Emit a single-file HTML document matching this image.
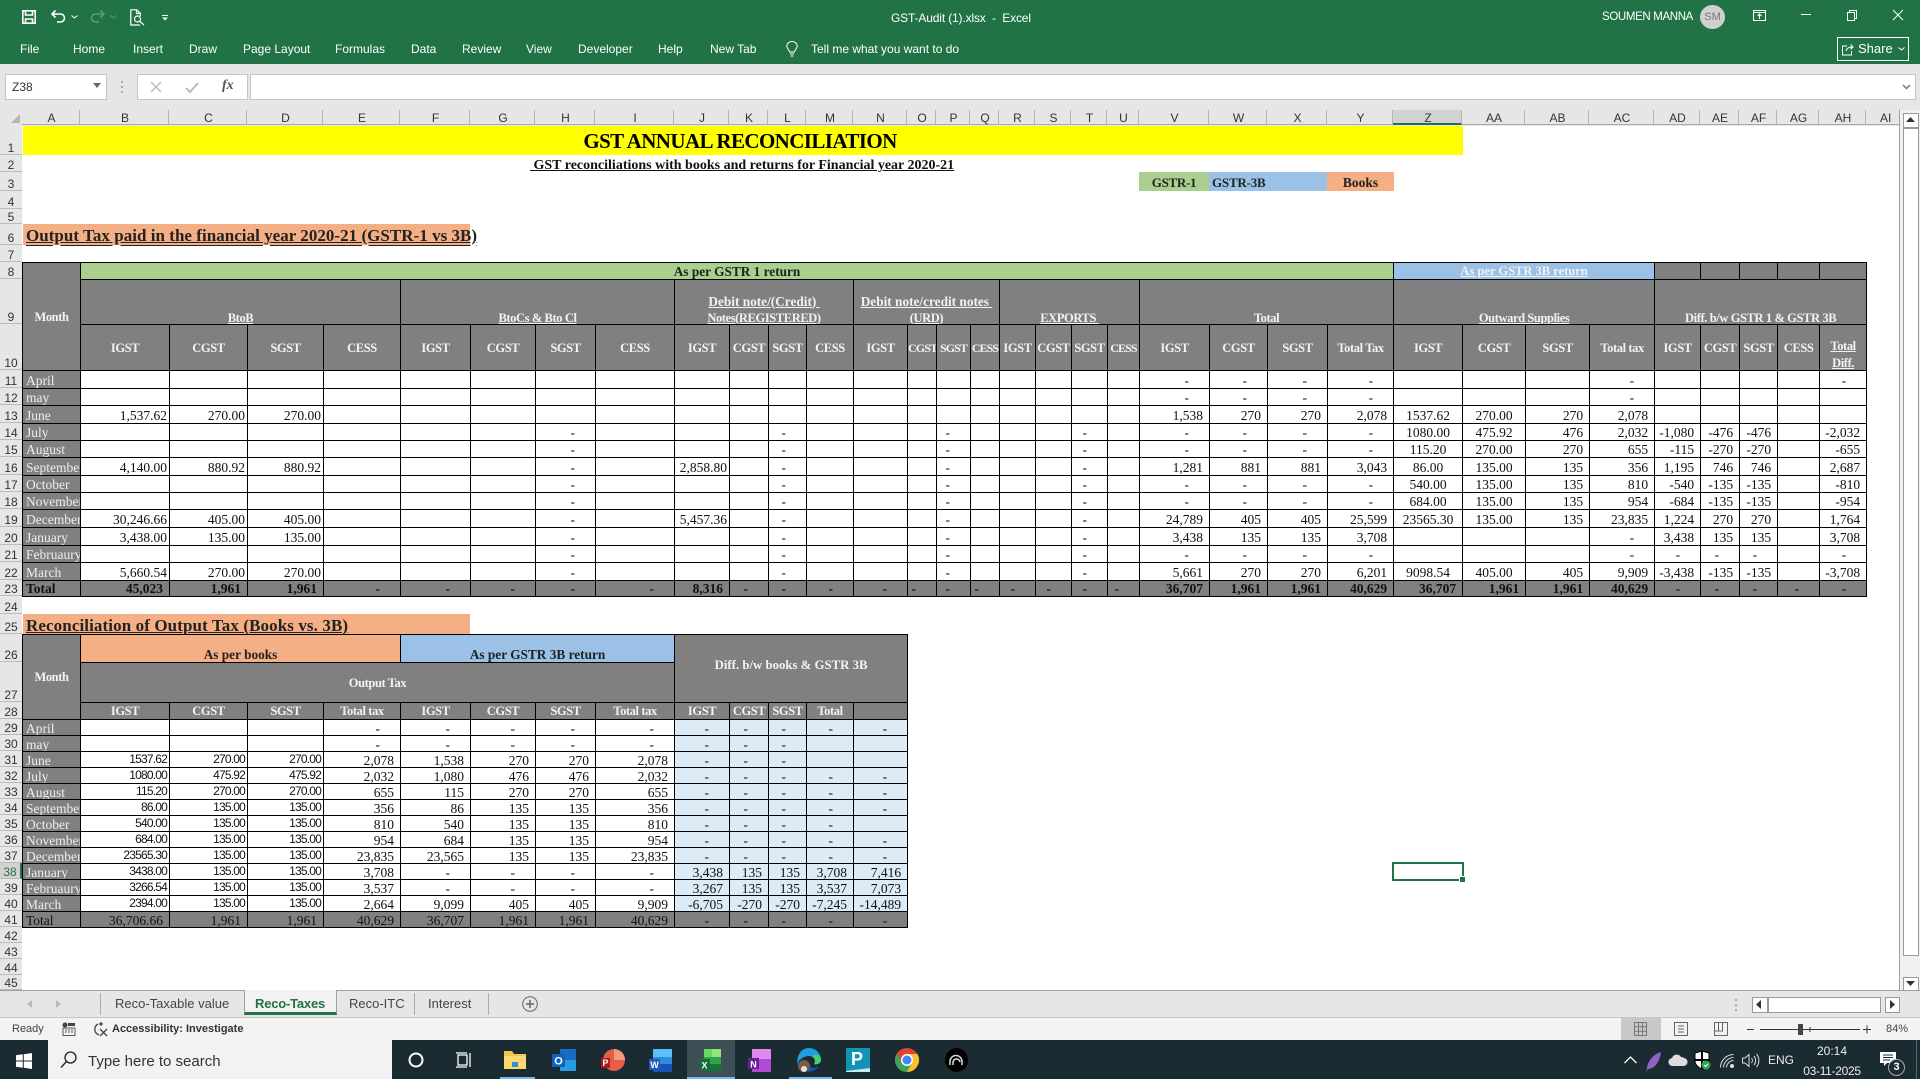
<!DOCTYPE html>
<html><head><meta charset="utf-8"><title>GST-Audit</title>
<style>
html,body{margin:0;padding:0;width:1920px;height:1079px;overflow:hidden;background:#fff;font-family:"Liberation Sans",sans-serif}
.a{position:absolute;white-space:nowrap}
.u{font-size:12px;color:#fff;line-height:14px}
.ch{position:absolute;top:110px;height:15px;background:#e6e6e6;border-right:1px solid #b5b5b5;font-size:12px;line-height:16px;text-align:center;color:#333;box-sizing:border-box;border-bottom:1px solid #aaa;padding-left:2px}
.rh{position:absolute;left:0;width:22px;background:#e6e6e6;border-bottom:1px solid #bbb;box-sizing:border-box;font-size:12px;line-height:12px;text-align:center;color:#333;display:flex;align-items:flex-end;justify-content:center}
table{position:absolute;left:22px;border-collapse:collapse;table-layout:fixed;font-family:"Liberation Serif",serif;font-size:13.5px;line-height:14px;color:#111}
td,th{border:1px solid #000;padding:0 6px 0 0;text-align:right;vertical-align:bottom;overflow:hidden;white-space:nowrap;font-weight:normal}
th.m,td.m{background:#808080;color:#eee;text-align:left;padding:0 0 0 3px;font-size:13.5px}
.d{padding-right:20px}.s{padding-right:2px}
.c{text-align:center;padding:0}
.h{background:#808080;color:#f2f2f2;font-weight:bold;text-align:center;padding:0;font-size:12.5px;letter-spacing:-.4px}
.h2{vertical-align:middle}
.w{letter-spacing:-.9px;font-size:12px}
.hl{font-size:13.3px;letter-spacing:0}
.un{text-decoration:underline}
.hb{line-height:16px}
.hb>div{position:relative;top:1.5px}
.t td,.t th{background:#808080;font-weight:bold;color:#111}
.g td{background:#808080;color:#111}
.b{background:#ddebf7}
.t2 td,.t2 th{line-height:12px}
.t2 td.h,.t2 th.h{line-height:14px}
.t2 td.f{line-height:14px}
.f{font-family:"Liberation Sans",sans-serif;font-size:12px;letter-spacing:-.8px;vertical-align:top;padding-right:2px}
.ser{font-family:"Liberation Serif",serif;font-weight:bold}
svg{position:absolute;overflow:visible}
</style></head><body>

<!-- title bar / ribbon -->
<div class="a" style="left:0;top:0;width:1920px;height:64px;background:#217346"></div>
<svg style="left:22px;top:10px" width="14" height="14" fill="none" stroke="#fff" stroke-width="1.6"><path d="M.8.8h12.4v12.4H.8zM3.5 1v4h7V1M3.5 13V9h7v4"/></svg>
<svg style="left:51px;top:10px" width="15" height="14" fill="none" stroke="#fff" stroke-width="1.6"><path d="M1 4h8.5a4 4 0 0 1 0 8H6M4.5 .5 1 4l3.5 3.5"/></svg>
<svg style="left:71px;top:15px" width="7" height="4" fill="none" stroke="#fff"><path d="M.5.5 3.5 3l3-2.5"/></svg>
<svg style="left:90px;top:10px" width="15" height="14" fill="none" stroke="#5f9a7c" stroke-width="1.6"><path d="M14 4H5.5a4 4 0 0 0 0 8H9M10.500 .5 14 4l-3.500 3.500"/></svg>
<svg style="left:110px;top:15px" width="7" height="4" fill="none" stroke="#5f9a7c"><path d="M.5.5 3.500 3l3-2.500"/></svg>
<svg style="left:130px;top:9px" width="15" height="17" fill="none" stroke="#fff" stroke-width="1.2"><path d="M10 16H.8V.8h6l3.500 3.500v3M6.500 1v3.500h3.500"/><circle cx="7.500" cy="10" r="3"/><path d="m10 12.500 4 3.500"/></svg>
<svg style="left:162px;top:15px" width="6" height="6" fill="#fff"><rect width="6" height="1"/><path d="M0 2.500h6l-3 3z"/></svg>
<div class="a u" style="left:891px;top:11px;letter-spacing:-.15px">GST-Audit (1).xlsx&nbsp; -&nbsp; Excel</div>
<div class="a u" style="left:1602px;top:10px;font-size:11.5px;letter-spacing:-.35px">SOUMEN MANNA</div>
<div class="a" style="left:1700px;top:5px;width:25px;height:24px;border-radius:50%;background:#d0d0d0;color:#777;font-size:11px;line-height:24px;text-align:center">SM</div>
<svg style="left:1753px;top:10px" width="13" height="11" fill="none" stroke="#fff"><path d="M.5.500h12v10H.500zM.500 2.500h12M6.500 9V4.500M4.500 6l2-2 2 2"/></svg>
<svg style="left:1801px;top:14px" width="10" height="2"><rect width="10" height="1" fill="#fff"/></svg>
<svg style="left:1847px;top:10px" width="10" height="11" fill="none" stroke="#fff"><path d="M.5 2.500h7v8h-7zM2.500 2.500V.5h7v8h-2"/></svg>
<svg style="left:1893px;top:10px" width="10" height="10" stroke="#fff"><path d="m0 0 10 10M10 0 0 10"/></svg>
<div class="a u" style="left:20px;top:42px">File</div>
<div class="a u" style="left:73px;top:42px">Home</div>
<div class="a u" style="left:133px;top:42px">Insert</div>
<div class="a u" style="left:189px;top:42px">Draw</div>
<div class="a u" style="left:243px;top:42px">Page Layout</div>
<div class="a u" style="left:335px;top:42px">Formulas</div>
<div class="a u" style="left:411px;top:42px">Data</div>
<div class="a u" style="left:462px;top:42px">Review</div>
<div class="a u" style="left:526px;top:42px">View</div>
<div class="a u" style="left:578px;top:42px">Developer</div>
<div class="a u" style="left:658px;top:42px">Help</div>
<div class="a u" style="left:710px;top:42px">New Tab</div>
<svg style="left:786px;top:41px" width="12" height="16" fill="none" stroke="#fff"><path d="M3.500 11C3 8.500.8 7.500.8 5a5.200 4.500 0 0 1 10.400 0c0 2.500-2.200 3.500-2.700 6zM4 13h4M4.500 15h3"/></svg>
<div class="a u" style="left:811px;top:42px">Tell me what you want to do</div>
<div class="a" style="left:1837px;top:37px;width:70px;height:22px;border:1px solid #fff"></div>
<svg style="left:1842px;top:43px" width="12" height="13" fill="none" stroke="#fff"><path d="M5 3H.5v9h9V8M4 8c.5-3 3-4 7-4M8.500 1.500 11 4 8.500 6.500"/></svg>
<div class="a" style="left:1858px;top:41px;font-size:13px;line-height:15px;color:#fff">Share</div>
<svg style="left:1898px;top:47px" width="7" height="4" fill="none" stroke="#fff"><path d="M.5.5 3.500 3l3-2.500"/></svg>

<!-- formula bar -->
<div class="a" style="left:0;top:64px;width:1920px;height:46px;background:#e6e6e6"></div>
<div class="a" style="left:5px;top:74px;width:100px;height:24px;background:#fff;border:1px solid #c6c6c6;font-size:12px;line-height:24px;text-indent:6px;color:#333">Z38</div>
<svg style="left:93px;top:83px" width="8" height="5"><path d="M0 0h8L4 5z" fill="#666"/></svg>
<svg style="left:121px;top:81px" width="2" height="12" fill="#aaa"><rect width="2" height="2"/><rect y="5" width="2" height="2"/><rect y="10" width="2" height="2"/></svg>
<div class="a" style="left:137px;top:74px;width:109px;height:24px;background:#fff;border:1px solid #c6c6c6"></div>
<svg style="left:150px;top:81px" width="12" height="12" stroke="#bbb" stroke-width="1.500"><path d="m1 1 10 10M11 1 1 11"/></svg>
<svg style="left:185px;top:82px" width="14" height="12" fill="none" stroke="#bbb" stroke-width="2"><path d="m1 6 4 4 8-9"/></svg>
<div class="a" style="left:222px;top:78px;font:italic bold 14px/16px 'Liberation Serif',serif;color:#555">fx</div>
<div class="a" style="left:250px;top:74px;width:1664px;height:24px;background:#fff;border:1px solid #c6c6c6"></div>
<svg style="left:1902px;top:84px" width="9" height="6" fill="none" stroke="#777" stroke-width="1.500"><path d="m1 1 3.500 3.500L8 1"/></svg>

<!-- column headers -->
<div class="a" style="left:0;top:110px;width:1920px;height:16px;background:#e6e6e6"></div>
<svg style="left:11px;top:114px" width="9" height="9"><path d="M9 0v9H0z" fill="#b5b5b5"/></svg>
<div class="ch" style="left:22px;width:58px">A</div><div class="ch" style="left:80px;width:89px">B</div><div class="ch" style="left:169px;width:78px">C</div><div class="ch" style="left:247px;width:76px">D</div><div class="ch" style="left:323px;width:77px">E</div><div class="ch" style="left:400px;width:70px">F</div><div class="ch" style="left:470px;width:65px">G</div><div class="ch" style="left:535px;width:60px">H</div><div class="ch" style="left:595px;width:79px">I</div><div class="ch" style="left:674px;width:55px">J</div><div class="ch" style="left:729px;width:39px">K</div><div class="ch" style="left:768px;width:38px">L</div><div class="ch" style="left:806px;width:47px">M</div><div class="ch" style="left:853px;width:54px">N</div><div class="ch" style="left:907px;width:29px">O</div><div class="ch" style="left:936px;width:34px">P</div><div class="ch" style="left:970px;width:29px">Q</div><div class="ch" style="left:999px;width:36px">R</div><div class="ch" style="left:1035px;width:36px">S</div><div class="ch" style="left:1071px;width:36px">T</div><div class="ch" style="left:1107px;width:32px">U</div><div class="ch" style="left:1139px;width:70px">V</div><div class="ch" style="left:1209px;width:58px">W</div><div class="ch" style="left:1267px;width:60px">X</div><div class="ch" style="left:1327px;width:66px">Y</div><div class="ch" style="left:1393px;width:69px;background:#d2d2d2;border-bottom:2px solid #217346">Z</div><div class="ch" style="left:1462px;width:63px">AA</div><div class="ch" style="left:1525px;width:64px">AB</div><div class="ch" style="left:1589px;width:65px">AC</div><div class="ch" style="left:1654px;width:46px">AD</div><div class="ch" style="left:1700px;width:39px">AE</div><div class="ch" style="left:1739px;width:38px">AF</div><div class="ch" style="left:1777px;width:42px">AG</div><div class="ch" style="left:1819px;width:47px">AH</div><div class="ch" style="left:1866px;width:34px;padding-left:14px;text-align:left">AI</div>

<!-- row headers -->
<div class="rh" style="top:126px;height:29px">1</div><div class="rh" style="top:155px;height:17px">2</div><div class="rh" style="top:172px;height:19px">3</div><div class="rh" style="top:191px;height:18px">4</div><div class="rh" style="top:209px;height:15px">5</div><div class="rh" style="top:224px;height:21px">6</div><div class="rh" style="top:245px;height:17px">7</div><div class="rh" style="top:262px;height:17px">8</div><div class="rh" style="top:279px;height:45px">9</div><div class="rh" style="top:324px;height:46px">10</div><div class="rh" style="top:370px;height:18px">11</div><div class="rh" style="top:388px;height:17px">12</div><div class="rh" style="top:405px;height:18px">13</div><div class="rh" style="top:423px;height:17px">14</div><div class="rh" style="top:440px;height:17px">15</div><div class="rh" style="top:457px;height:18px">16</div><div class="rh" style="top:475px;height:17px">17</div><div class="rh" style="top:492px;height:17px">18</div><div class="rh" style="top:509px;height:18px">19</div><div class="rh" style="top:527px;height:18px">20</div><div class="rh" style="top:545px;height:17px">21</div><div class="rh" style="top:562px;height:18px">22</div><div class="rh" style="top:580px;height:16px">23</div><div class="rh" style="top:596px;height:18px">24</div><div class="rh" style="top:614px;height:20px">25</div><div class="rh" style="top:634px;height:28px">26</div><div class="rh" style="top:662px;height:40px">27</div><div class="rh" style="top:702px;height:17px">28</div><div class="rh" style="top:719px;height:16px">29</div><div class="rh" style="top:735px;height:16px">30</div><div class="rh" style="top:751px;height:16px">31</div><div class="rh" style="top:767px;height:16px">32</div><div class="rh" style="top:783px;height:16px">33</div><div class="rh" style="top:799px;height:16px">34</div><div class="rh" style="top:815px;height:16px">35</div><div class="rh" style="top:831px;height:16px">36</div><div class="rh" style="top:847px;height:16px">37</div><div class="rh" style="top:863px;height:16px;background:#d2d2d2;color:#217346;border-right:2px solid #217346">38</div><div class="rh" style="top:879px;height:16px">39</div><div class="rh" style="top:895px;height:16px">40</div><div class="rh" style="top:911px;height:16px">41</div><div class="rh" style="top:927px;height:16px">42</div><div class="rh" style="top:943px;height:16px">43</div><div class="rh" style="top:959px;height:16px">44</div><div class="rh" style="top:975px;height:15px">45</div>

<!-- top cells -->
<div class="a" style="left:23px;top:126px;width:1440px;height:29px;background:#ff0"></div>
<div class="a ser" style="left:0;top:128px;width:1480px;text-align:center;font-size:21px;line-height:26px;color:#000;letter-spacing:-.6px">GST ANNUAL RECONCILIATION</div>
<div class="a ser" style="left:530px;top:158px;font-size:14px;line-height:16px;color:#111;text-decoration:underline;letter-spacing:0">&nbsp;GST reconciliations with books and returns for Financial year 2020-21</div>
<div class="a ser" style="left:1139px;top:172px;width:70px;height:19px;background:#a9d08e;font-size:13px;line-height:22px;text-align:center;color:#222;letter-spacing:-.3px">GSTR-1</div>
<div class="a ser" style="left:1209px;top:172px;width:118px;height:19px;background:#9bc2e6;font-size:13px;line-height:22px;text-indent:3px;color:#222;letter-spacing:-.2px">GSTR-3B</div>
<div class="a ser" style="left:1327px;top:172px;width:67px;height:19px;background:#f4b084;font-size:13.5px;line-height:22px;text-align:center;color:#222">Books</div>
<div class="a" style="left:23px;top:224px;width:447px;height:21px;background:#f4b084"></div>
<div class="a ser" style="left:26px;top:226px;font-size:17px;line-height:20px;color:#222;text-decoration:underline double;letter-spacing:.03px">Output Tax paid in the financial year 2020-21 (GSTR-1 vs 3B)</div>
<div class="a" style="left:23px;top:614px;width:447px;height:20px;background:#f4b084"></div>
<div class="a ser" style="left:26px;top:616px;font-size:17px;line-height:20px;color:#222;text-decoration:underline;letter-spacing:.1px">Reconciliation of Output Tax (Books vs. 3B)</div>

<!-- table 1 -->
<table style="top:262px;width:1844px">
<colgroup><col style="width:58px"><col style="width:89px"><col style="width:78px"><col style="width:76px"><col style="width:77px"><col style="width:70px"><col style="width:65px"><col style="width:60px"><col style="width:79px"><col style="width:55px"><col style="width:39px"><col style="width:38px"><col style="width:47px"><col style="width:54px"><col style="width:29px"><col style="width:34px"><col style="width:29px"><col style="width:36px"><col style="width:36px"><col style="width:36px"><col style="width:32px"><col style="width:70px"><col style="width:58px"><col style="width:60px"><col style="width:66px"><col style="width:69px"><col style="width:63px"><col style="width:64px"><col style="width:65px"><col style="width:46px"><col style="width:39px"><col style="width:38px"><col style="width:42px"><col style="width:47px"></colgroup>
<tr style="height:17px"><th class="h h2" rowspan="3">Month</th><td class="h hl" colspan="24" style="background:#a9d08e;color:#222;line-height:15px">As per GSTR 1 return</td><td class="h un" colspan="4" style="background:#9bc2e6;line-height:15px;letter-spacing:0">As per GSTR 3B return</td><td class="h"></td><td class="h"></td><td class="h"></td><td class="h"></td><td class="h"></td></tr>
<tr style="height:45px"><td class="h hb un" colspan="4"><div>BtoB</div></td><td class="h hb un" colspan="4"><div>BtoCs &amp; Bto Cl</div></td><td class="h hb un" colspan="4"><div><span class="hl">Debit note/(Credit)&nbsp;</span><br>Notes(REGISTERED)</div></td><td class="h hb un" colspan="4"><div><span class="hl">Debit note/credit notes&nbsp;</span><br>(URD)</div></td><td class="h hb un" colspan="4"><div>EXPORTS&nbsp;</div></td><td class="h hb" colspan="4"><div>Total</div></td><td class="h hb un" colspan="4"><div>Outward Supplies</div></td><td class="h hb" colspan="5"><div>Diff. b/w GSTR 1 &amp; GSTR 3B</div></td></tr>
<tr style="height:46px"><td class="h h2">IGST</td><td class="h h2">CGST</td><td class="h h2">SGST</td><td class="h h2">CESS</td><td class="h h2">IGST</td><td class="h h2">CGST</td><td class="h h2">SGST</td><td class="h h2">CESS</td><td class="h h2">IGST</td><td class="h h2">CGST</td><td class="h h2">SGST</td><td class="h h2">CESS</td><td class="h h2">IGST</td><td class="h h2 w">CGST</td><td class="h h2 w">SGST</td><td class="h h2 w">CESS</td><td class="h h2">IGST</td><td class="h h2">CGST</td><td class="h h2">SGST</td><td class="h h2 w">CESS</td><td class="h h2">IGST</td><td class="h h2">CGST</td><td class="h h2">SGST</td><td class="h h2">Total Tax</td><td class="h h2">IGST</td><td class="h h2">CGST</td><td class="h h2">SGST</td><td class="h h2">Total tax</td><td class="h h2">IGST</td><td class="h h2">CGST</td><td class="h h2">SGST</td><td class="h h2">CESS</td><td class="h h2 un" style="line-height:17px;padding-top:10px"><div style="position:relative;top:2px">Total<br>Diff.</div></td></tr>
<tr style="height:18px"><th class="m">April</th><td></td><td></td><td></td><td></td><td></td><td></td><td></td><td></td><td></td><td></td><td></td><td></td><td></td><td></td><td></td><td></td><td></td><td></td><td></td><td></td><td class="d">-</td><td class="d">-</td><td class="d">-</td><td class="d">-</td><td></td><td></td><td></td><td class="d">-</td><td></td><td></td><td></td><td></td><td class="d">-</td></tr>
<tr style="height:17px"><th class="m">may</th><td></td><td></td><td></td><td></td><td></td><td></td><td></td><td></td><td></td><td></td><td></td><td></td><td></td><td></td><td></td><td></td><td></td><td></td><td></td><td></td><td class="d">-</td><td class="d">-</td><td class="d">-</td><td class="d">-</td><td></td><td></td><td></td><td class="d">-</td><td></td><td></td><td></td><td></td><td></td></tr>
<tr style="height:18px"><th class="m">June</th><td class="s">1,537.62</td><td class="s">270.00</td><td class="s">270.00</td><td></td><td></td><td></td><td></td><td></td><td></td><td></td><td></td><td></td><td></td><td></td><td></td><td></td><td></td><td></td><td></td><td></td><td>1,538</td><td>270</td><td>270</td><td>2,078</td><td class="c">1537.62</td><td class="c">270.00</td><td>270</td><td>2,078</td><td></td><td></td><td></td><td></td><td></td></tr>
<tr style="height:17px"><th class="m">July</th><td></td><td></td><td></td><td></td><td></td><td></td><td class="d">-</td><td></td><td></td><td></td><td class="d">-</td><td></td><td></td><td></td><td class="d">-</td><td></td><td></td><td></td><td class="d">-</td><td></td><td class="d">-</td><td class="d">-</td><td class="d">-</td><td class="d">-</td><td class="c">1080.00</td><td class="c">475.92</td><td>476</td><td>2,032</td><td>-1,080</td><td>-476</td><td>-476</td><td></td><td>-2,032</td></tr>
<tr style="height:17px"><th class="m">August</th><td></td><td></td><td></td><td></td><td></td><td></td><td class="d">-</td><td></td><td></td><td></td><td class="d">-</td><td></td><td></td><td></td><td class="d">-</td><td></td><td></td><td></td><td class="d">-</td><td></td><td class="d">-</td><td class="d">-</td><td class="d">-</td><td class="d">-</td><td class="c">115.20</td><td class="c">270.00</td><td>270</td><td>655</td><td>-115</td><td>-270</td><td>-270</td><td></td><td>-655</td></tr>
<tr style="height:18px"><th class="m">September</th><td class="s">4,140.00</td><td class="s">880.92</td><td class="s">880.92</td><td></td><td></td><td></td><td class="d">-</td><td></td><td class="s">2,858.80</td><td></td><td class="d">-</td><td></td><td></td><td></td><td class="d">-</td><td></td><td></td><td></td><td class="d">-</td><td></td><td>1,281</td><td>881</td><td>881</td><td>3,043</td><td class="c">86.00</td><td class="c">135.00</td><td>135</td><td>356</td><td>1,195</td><td>746</td><td>746</td><td></td><td>2,687</td></tr>
<tr style="height:17px"><th class="m">October</th><td></td><td></td><td></td><td></td><td></td><td></td><td class="d">-</td><td></td><td></td><td></td><td class="d">-</td><td></td><td></td><td></td><td class="d">-</td><td></td><td></td><td></td><td class="d">-</td><td></td><td class="d">-</td><td class="d">-</td><td class="d">-</td><td class="d">-</td><td class="c">540.00</td><td class="c">135.00</td><td>135</td><td>810</td><td>-540</td><td>-135</td><td>-135</td><td></td><td>-810</td></tr>
<tr style="height:17px"><th class="m">November</th><td></td><td></td><td></td><td></td><td></td><td></td><td class="d">-</td><td></td><td></td><td></td><td class="d">-</td><td></td><td></td><td></td><td class="d">-</td><td></td><td></td><td></td><td class="d">-</td><td></td><td class="d">-</td><td class="d">-</td><td class="d">-</td><td class="d">-</td><td class="c">684.00</td><td class="c">135.00</td><td>135</td><td>954</td><td>-684</td><td>-135</td><td>-135</td><td></td><td>-954</td></tr>
<tr style="height:18px"><th class="m">December</th><td class="s">30,246.66</td><td class="s">405.00</td><td class="s">405.00</td><td></td><td></td><td></td><td class="d">-</td><td></td><td class="s">5,457.36</td><td></td><td class="d">-</td><td></td><td></td><td></td><td class="d">-</td><td></td><td></td><td></td><td class="d">-</td><td></td><td>24,789</td><td>405</td><td>405</td><td>25,599</td><td class="c">23565.30</td><td class="c">135.00</td><td>135</td><td>23,835</td><td>1,224</td><td>270</td><td>270</td><td></td><td>1,764</td></tr>
<tr style="height:18px"><th class="m">January</th><td class="s">3,438.00</td><td class="s">135.00</td><td class="s">135.00</td><td></td><td></td><td></td><td class="d">-</td><td></td><td></td><td></td><td class="d">-</td><td></td><td></td><td></td><td class="d">-</td><td></td><td></td><td></td><td class="d">-</td><td></td><td>3,438</td><td>135</td><td>135</td><td>3,708</td><td></td><td></td><td></td><td class="d">-</td><td>3,438</td><td>135</td><td>135</td><td></td><td>3,708</td></tr>
<tr style="height:17px"><th class="m">Februaury</th><td></td><td></td><td></td><td></td><td></td><td></td><td class="d">-</td><td></td><td></td><td></td><td class="d">-</td><td></td><td></td><td></td><td class="d">-</td><td></td><td></td><td></td><td class="d">-</td><td></td><td class="d">-</td><td class="d">-</td><td class="d">-</td><td class="d">-</td><td></td><td></td><td></td><td class="d">-</td><td class="d">-</td><td class="d">-</td><td class="d">-</td><td></td><td class="d">-</td></tr>
<tr style="height:18px"><th class="m">March</th><td class="s">5,660.54</td><td class="s">270.00</td><td class="s">270.00</td><td></td><td></td><td></td><td class="d">-</td><td></td><td></td><td></td><td class="d">-</td><td></td><td></td><td></td><td class="d">-</td><td></td><td></td><td></td><td class="d">-</td><td></td><td>5,661</td><td>270</td><td>270</td><td>6,201</td><td class="c">9098.54</td><td class="c">405.00</td><td>405</td><td>9,909</td><td>-3,438</td><td>-135</td><td>-135</td><td></td><td>-3,708</td></tr>
<tr style="height:16px" class="t"><th class="m" style="background:#808080;color:#111;font-weight:bold">Total</th><td>45,023</td><td>1,961</td><td>1,961</td><td class="d">-</td><td class="d">-</td><td class="d">-</td><td class="d">-</td><td class="d">-</td><td>8,316</td><td class="d">-</td><td class="d">-</td><td class="d">-</td><td class="d">-</td><td class="d">-</td><td class="d">-</td><td class="d">-</td><td class="d">-</td><td class="d">-</td><td class="d">-</td><td class="d">-</td><td>36,707</td><td>1,961</td><td>1,961</td><td>40,629</td><td>36,707</td><td>1,961</td><td>1,961</td><td>40,629</td><td class="d">-</td><td class="d">-</td><td class="d">-</td><td class="d">-</td><td class="d">-</td></tr>
</table>

<!-- table 2 -->
<table class="t2" style="top:634px;width:885px">
<colgroup><col style="width:58px"><col style="width:89px"><col style="width:78px"><col style="width:76px"><col style="width:77px"><col style="width:70px"><col style="width:65px"><col style="width:60px"><col style="width:79px"><col style="width:55px"><col style="width:39px"><col style="width:38px"><col style="width:47px"><col style="width:54px"></colgroup>
<tr style="height:28px"><th class="h h2" rowspan="3">Month</th><td class="h hl" colspan="4" style="background:#f4b084;color:#222">As per books</td><td class="h hl" colspan="4" style="background:#9bc2e6;color:#222">As per GSTR 3B return</td><td class="h h2" colspan="5" rowspan="2" style="padding-bottom:8px;font-size:12.8px;letter-spacing:0">Diff. b/w books &amp; GSTR 3B</td></tr>
<tr style="height:40px"><td class="h h2" colspan="8" style="font-weight:bold">Output Tax</td></tr>
<tr style="height:17px"><td class="h h2">IGST</td><td class="h h2">CGST</td><td class="h h2">SGST</td><td class="h h2">Total tax</td><td class="h h2">IGST</td><td class="h h2">CGST</td><td class="h h2">SGST</td><td class="h h2">Total tax</td><td class="h h2">IGST</td><td class="h h2">CGST</td><td class="h h2">SGST</td><td class="h h2">Total</td><td class="h h2"></td></tr>
<tr style="height:16px"><th class="m">April</th><td></td><td></td><td></td><td class="d">-</td><td class="d">-</td><td class="d">-</td><td class="d">-</td><td class="d">-</td><td class="d b">-</td><td class="d b">-</td><td class="d b">-</td><td class="d b">-</td><td class="d b">-</td></tr>
<tr style="height:16px"><th class="m">may</th><td></td><td></td><td></td><td class="d">-</td><td class="d">-</td><td class="d">-</td><td class="d">-</td><td class="d">-</td><td class="d b">-</td><td class="d b">-</td><td class="d b">-</td><td class="b"></td><td class="b"></td></tr>
<tr style="height:16px"><th class="m">June</th><td class="f">1537.62</td><td class="f">270.00</td><td class="f">270.00</td><td>2,078</td><td>1,538</td><td>270</td><td>270</td><td>2,078</td><td class="d b">-</td><td class="d b">-</td><td class="d b">-</td><td class="b"></td><td class="b"></td></tr>
<tr style="height:16px"><th class="m">July</th><td class="f">1080.00</td><td class="f">475.92</td><td class="f">475.92</td><td>2,032</td><td>1,080</td><td>476</td><td>476</td><td>2,032</td><td class="d b">-</td><td class="d b">-</td><td class="d b">-</td><td class="d b">-</td><td class="d b">-</td></tr>
<tr style="height:16px"><th class="m">August</th><td class="f">115.20</td><td class="f">270.00</td><td class="f">270.00</td><td>655</td><td>115</td><td>270</td><td>270</td><td>655</td><td class="d b">-</td><td class="d b">-</td><td class="d b">-</td><td class="d b">-</td><td class="d b">-</td></tr>
<tr style="height:16px"><th class="m">September</th><td class="f">86.00</td><td class="f">135.00</td><td class="f">135.00</td><td>356</td><td>86</td><td>135</td><td>135</td><td>356</td><td class="d b">-</td><td class="d b">-</td><td class="d b">-</td><td class="d b">-</td><td class="d b">-</td></tr>
<tr style="height:16px"><th class="m">October</th><td class="f">540.00</td><td class="f">135.00</td><td class="f">135.00</td><td>810</td><td>540</td><td>135</td><td>135</td><td>810</td><td class="d b">-</td><td class="d b">-</td><td class="d b">-</td><td class="d b">-</td><td class="b"></td></tr>
<tr style="height:16px"><th class="m">November</th><td class="f">684.00</td><td class="f">135.00</td><td class="f">135.00</td><td>954</td><td>684</td><td>135</td><td>135</td><td>954</td><td class="d b">-</td><td class="d b">-</td><td class="d b">-</td><td class="d b">-</td><td class="d b">-</td></tr>
<tr style="height:16px"><th class="m">December</th><td class="f">23565.30</td><td class="f">135.00</td><td class="f">135.00</td><td>23,835</td><td>23,565</td><td>135</td><td>135</td><td>23,835</td><td class="d b">-</td><td class="d b">-</td><td class="d b">-</td><td class="d b">-</td><td class="d b">-</td></tr>
<tr style="height:16px"><th class="m">January</th><td class="f">3438.00</td><td class="f">135.00</td><td class="f">135.00</td><td>3,708</td><td class="d">-</td><td class="d">-</td><td class="d">-</td><td class="d">-</td><td class="b">3,438</td><td class="b">135</td><td class="b">135</td><td class="b">3,708</td><td class="b">7,416</td></tr>
<tr style="height:16px"><th class="m">Februaury</th><td class="f">3266.54</td><td class="f">135.00</td><td class="f">135.00</td><td>3,537</td><td class="d">-</td><td class="d">-</td><td class="d">-</td><td class="d">-</td><td class="b">3,267</td><td class="b">135</td><td class="b">135</td><td class="b">3,537</td><td class="b">7,073</td></tr>
<tr style="height:16px"><th class="m">March</th><td class="f">2394.00</td><td class="f">135.00</td><td class="f">135.00</td><td>2,664</td><td>9,099</td><td>405</td><td>405</td><td>9,909</td><td class="b">-6,705</td><td class="b">-270</td><td class="b">-270</td><td class="b">-7,245</td><td class="b">-14,489</td></tr>
<tr style="height:16px" class="g"><th class="m" style="color:#111">Total</th><td>36,706.66</td><td>1,961</td><td>1,961</td><td>40,629</td><td>36,707</td><td>1,961</td><td>1,961</td><td>40,629</td><td class="d">-</td><td class="d">-</td><td class="d">-</td><td class="d">-</td><td class="d">-</td></tr>
</table>

<!-- selected cell -->
<div class="a" style="left:1392px;top:862px;width:68px;height:15px;border:2px solid #217346"></div>
<div class="a" style="left:1460px;top:877px;width:5px;height:5px;background:#217346;border:1px solid #fff;box-sizing:content-box;margin:-1px"></div>

<!-- vertical scrollbar -->
<div class="a" style="left:1899px;top:110px;width:21px;height:881px;background:#f0f0f0;border-left:1px solid #a0a0a0;box-sizing:border-box"></div>
<div class="a" style="left:1903px;top:113px;width:14px;height:13px;background:#fff;border:1px solid #999"></div>
<svg style="left:1906px;top:117px" width="9" height="5"><path d="M4.500 0 9 5H0z" fill="#333"/></svg>
<div class="a" style="left:1903px;top:128px;width:14px;height:826px;background:#fff;border:1px solid #999"></div>
<div class="a" style="left:1903px;top:977px;width:14px;height:12px;background:#fff;border:1px solid #999"></div>
<svg style="left:1906px;top:981px" width="9" height="5"><path d="M0 0h9L4.500 5z" fill="#333"/></svg>

<!-- sheet tabs -->
<div class="a" style="left:0;top:990px;width:1920px;height:28px;background:#e6e6e6;border-top:1px solid #a0a0a0;border-bottom:1px solid #c6c6c6;box-sizing:border-box"></div>
<svg style="left:27px;top:1000px" width="34" height="8" fill="#bbb"><path d="M5 0v8L0 4zM29 0v8l5-4z"/></svg>
<div class="a" style="left:100px;top:993px;width:1px;height:22px;background:#aaa"></div>
<div class="a" style="left:115px;top:996px;font-size:13px;line-height:16px;color:#444">Reco-Taxable value</div>
<div class="a" style="left:244px;top:990px;width:93px;height:25px;background:#f2f2f2;border-left:1px solid #a0a0a0;border-right:1px solid #a0a0a0;box-sizing:border-box;border-bottom:3px solid #217346"></div>
<div class="a" style="left:255px;top:996px;font-size:13px;line-height:16px;font-weight:bold;color:#217346;letter-spacing:-.2px">Reco-Taxes</div>
<div class="a" style="left:349px;top:996px;font-size:13px;line-height:16px;color:#444">Reco-ITC</div>
<div class="a" style="left:414px;top:993px;width:1px;height:22px;background:#aaa"></div>
<div class="a" style="left:428px;top:996px;font-size:13px;line-height:16px;color:#444">Interest</div>
<div class="a" style="left:488px;top:993px;width:1px;height:22px;background:#aaa"></div>
<svg style="left:522px;top:996px" width="16" height="16" fill="none" stroke="#666"><circle cx="8" cy="8" r="7.300"/><path d="M8 4v8M4 8h8" stroke-width="1.500"/></svg>
<svg style="left:1735px;top:999px" width="2" height="12" fill="#aaa"><rect width="2" height="2"/><rect y="5" width="2" height="2"/><rect y="10" width="2" height="2"/></svg>
<div class="a" style="left:1752px;top:997px;width:14px;height:14px;background:#fff;border:1px solid #999"></div>
<svg style="left:1756px;top:1000px" width="5" height="9"><path d="M5 0v9L0 4.500z" fill="#333"/></svg>
<div class="a" style="left:1768px;top:997px;width:111px;height:14px;background:#fff;border:1px solid #999"></div>
<div class="a" style="left:1885px;top:997px;width:13px;height:14px;background:#fff;border:1px solid #999"></div>
<svg style="left:1890px;top:1000px" width="5" height="9"><path d="M0 0v9l5-4.500z" fill="#333"/></svg>

<!-- status bar -->
<div class="a" style="left:0;top:1018px;width:1920px;height:22px;background:#f3f3f3"></div>
<div class="a" style="left:12px;top:1022px;font-size:11px;line-height:14px;color:#444">Ready</div>
<svg style="left:62px;top:1022px" width="14" height="14"><circle cx="3" cy="3" r="2.500" fill="#444"/><rect x="6" y="1" width="7" height="3" fill="#444"/><rect x="1" y="6" width="12" height="7.500" fill="none" stroke="#555"/><path d="M3 8h2M6 8h2M9 8h2M3 10h2M6 10h2M9 10h2" stroke="#555"/></svg>
<svg style="left:93px;top:1021px" width="16" height="16" fill="none" stroke="#444" stroke-width="1.300"><path d="M5 3a6 6 0 0 0 1 11M8 1v4M6 3h4M7 8l7 7M14 8l-7 7"/></svg>
<div class="a" style="left:112px;top:1022px;font-size:11px;line-height:14px;font-weight:bold;color:#333">Accessibility: Investigate</div>
<div class="a" style="left:1621px;top:1018px;width:40px;height:22px;background:#c8c8c8"></div>
<svg style="left:1634px;top:1022px" width="13" height="14" fill="none" stroke="#777"><path d="M.5.5h12v13H.5zM4.500.5v13M8.500.5v13M.5 4.800h12M.5 9.200h12"/></svg>
<svg style="left:1674px;top:1022px" width="14" height="14" fill="none" stroke="#666"><path d="M.5.5h13v13H.5zM4 4h6M4 7h6M4 10h6"/></svg>
<svg style="left:1714px;top:1022px" width="14" height="14" fill="none" stroke="#666"><path d="M.5.5h13v13H.5zM.5 9h8V.5M4.500.5V9"/></svg>
<svg style="left:1747px;top:1028px" width="125" height="9" stroke="#333"><path d="M0 1.500h7M13 1.500h100M116 1.500h8M120 -2.500v8"/><rect x="51" y="-4" width="5" height="11" fill="#444" stroke="none"/><path d="M63-1v5" stroke="#333"/></svg>
<div class="a" style="left:1886px;top:1022px;font-size:11px;line-height:14px;color:#444">84%</div>

<!-- taskbar -->
<div class="a" style="left:0;top:1040px;width:1920px;height:39px;background:#1b2b32"></div>
<svg style="left:16px;top:1053px" width="16" height="16" fill="#fff"><path d="M0 2.300 6.800 1.300v6.200H0zM7.800 1.200 16 0v7.500H7.800zM0 8.500h6.800v6.200L0 13.700zM7.800 8.500H16V16l-8.200-1.200z"/></svg>
<div class="a" style="left:48px;top:1040px;width:344px;height:39px;background:#f2f2f2"></div>
<svg style="left:60px;top:1051px" width="17" height="18" fill="none" stroke="#222" stroke-width="1.300"><circle cx="10.500" cy="6.500" r="5.500"/><path d="M6.500 10.500 1 16.500"/></svg>
<div class="a" style="left:88px;top:1053px;font-size:15px;line-height:18px;color:#333">Type here to search</div>
<svg style="left:408px;top:1052px" width="16" height="16" fill="none" stroke="#fff" stroke-width="2"><circle cx="8" cy="8" r="6.500"/></svg>
<svg style="left:456px;top:1052px" width="16" height="16" fill="none" stroke="#fff" stroke-width="1.300"><path d="M2 3h9v10H2zM0 1h11M0 15h11M14 1v14" /></svg>
<div class="a" style="left:500px;top:1077px;width:35px;height:2px;background:#76b9ed"></div>
<svg style="left:504px;top:1049px" width="22" height="22"><path d="M0 2h8l2 3h12v15H0z" fill="#f4c54a"/><path d="M0 7h22v13H0z" fill="#fbd96e"/><path d="M8 13h6v5H8z" fill="#2d8fd5"/></svg>
<svg style="left:552px;top:1049px" width="25" height="22"><path d="M8 0h16v12H8z" fill="#1b6cc1"/><path d="M8 11h16v11H8z" fill="#2a9be0"/><path d="M0 5h13v13H0z" fill="#0c64c0"/><text x="6.500" y="15.500" text-anchor="middle" font-size="11" font-weight="bold" fill="#fff" font-family="Liberation Sans,sans-serif">O</text></svg>
<svg style="left:601px;top:1049px" width="24" height="23"><circle cx="13" cy="11" r="11" fill="#e85d4a"/><path d="M13 0a11 11 0 0 1 11 11H13z" fill="#ee9c80"/><path d="M0 9h9v10H0z" fill="#a81c1c"/><text x="4.500" y="17" text-anchor="middle" font-size="9" font-weight="bold" fill="#fff" font-family="Liberation Sans,sans-serif">P</text></svg>
<svg style="left:649px;top:1049px" width="23" height="23"><path d="M4 0h19v8H4z" fill="#5ac0f5"/><path d="M4 8h19v7H4z" fill="#2f8de0"/><path d="M4 15h19v8H4z" fill="#1a52b5"/><path d="M0 10h11v11H0z" fill="#1e5bbf"/><text x="5.500" y="19" text-anchor="middle" font-size="9" font-weight="bold" fill="#fff" font-family="Liberation Sans,sans-serif">W</text></svg>
<div class="a" style="left:687px;top:1040px;width:48px;height:39px;background:#3e4f56"></div>
<div class="a" style="left:687px;top:1077px;width:48px;height:2px;background:#76b9ed"></div>
<svg style="left:699px;top:1049px" width="23" height="23"><path d="M5 0h8v8H5z" fill="#69d764"/><path d="M13 0h9v8h-9z" fill="#8ee67c"/><path d="M5 8h17v7H5z" fill="#33a34a"/><path d="M5 15h17v7H5z" fill="#17733a"/><path d="M0 10h11v11H0z" fill="#186b3c"/><text x="5.500" y="19.500" text-anchor="middle" font-size="9" font-weight="bold" fill="#fff" font-family="Liberation Sans,sans-serif">X</text></svg>
<svg style="left:748px;top:1049px" width="23" height="23"><path d="M4 0h19v23H4z" fill="#b24ad6"/><path d="M4 0h19v10H4z" fill="#e08af0"/><path d="M0 9h11v11H0z" fill="#6a1f9b"/><text x="5.500" y="18.500" text-anchor="middle" font-size="9" font-weight="bold" fill="#fff" font-family="Liberation Sans,sans-serif">N</text></svg>
<div class="a" style="left:789px;top:1077px;width:43px;height:2px;background:#76b9ed"></div>
<svg style="left:797px;top:1048px" width="25" height="24"><path d="M12 0a12 12 0 0 1 12 12c0 4-5 5-7 4 2-2 1-8-5-8-6 0-10 4-12 8C0 6 5 0 12 0z" fill="#1f9fe0"/><path d="M24 12c0 3-4 5-7 4 2-2 1-6-2-8 4-3 9 0 9 4z" fill="#46cf6f"/><path d="M0 14a12 12 0 0 0 22 4c-5 3-11 2-12-4z" fill="#0c59a4"/><circle cx="7" cy="18" r="6" fill="#7a5b48"/><circle cx="7" cy="21" r="3" fill="#e8e2dc"/></svg>
<svg style="left:846px;top:1048px" width="24" height="24"><path d="M0 0h24v24H0z" fill="#1193b4"/><path d="M0 23l24-3v4H0z" fill="#cfe8ef"/><text x="11" y="17" text-anchor="middle" font-size="18" font-weight="bold" fill="#fff" font-family="Liberation Sans,sans-serif">P</text></svg>
<svg style="left:895px;top:1048px" width="24" height="24"><circle cx="12" cy="12" r="12" fill="#db4437"/><path d="M12 24a12 12 0 0 0 10.400-18H12l-3 6z" fill="#fbc02d"/><path d="M12 24 17.500 14H7L1.600 6A12 12 0 0 0 12 24z" fill="#3aa757"/><circle cx="12" cy="12" r="6" fill="#fff"/><circle cx="12" cy="12" r="4.500" fill="#4285f4"/></svg>
<svg style="left:945px;top:1048px" width="23" height="24" fill="none"><ellipse cx="11.500" cy="12" rx="11.500" ry="12" fill="#000"/><path d="M5 17v-3a6 6 0 0 1 12-1v4M8 17v-2a3.500 3.500 0 0 1 7-1" stroke="#ddd" stroke-width="1.500"/></svg>
<!-- tray -->
<svg style="left:1624px;top:1056px" width="13" height="8" fill="none" stroke="#fff" stroke-width="1.300"><path d="m.5 7 6-6 6 6"/></svg>
<svg style="left:1646px;top:1052px" width="16" height="20"><path d="M15 0C8 2 2 8 1 16l-1 4 2-3c7 0 12-8 13-17z" fill="#8e63c7"/></svg>
<svg style="left:1669px;top:1055px" width="18" height="11"><path d="M4 11a4 4 0 0 1-1-8 5 5 0 0 1 9-1 4 4 0 0 1 3 1 4 4 0 0 1-1 8z" fill="#ddd"/></svg>
<svg style="left:1694px;top:1051px" width="18" height="20"><path d="M8 0 15 2v8c0 4-4 7-7 8-3-1-7-4-7-8V2z" fill="#fff" stroke="#000"/><path d="M7 0h2v18H7zM0 8h16v2H0z" fill="#000"/><circle cx="12" cy="14" r="4.500" fill="#2da44e"/><path d="m10 14 1.500 1.500L14 13" stroke="#fff" fill="none"/></svg>
<svg style="left:1720px;top:1054px" width="14" height="14" fill="none" stroke="#ddd"><path d="M.5 13.500c0-7 6-13 13-13M3.500 13.500c0-5 5-10 10-10M6.500 13.500c0-3 3-7 7-7"/><circle cx="12" cy="12" r="1.500" fill="#ddd"/></svg>
<svg style="left:1742px;top:1053px" width="16" height="15" fill="none" stroke="#ddd"><path d="M.5 5H3L7 1.500v12L3 10H.5zM9.500 5a4 4 0 0 1 0 5M12 3a7 7 0 0 1 0 9M14.500 1a10 10 0 0 1 0 13"/></svg>
<div class="a" style="left:1768px;top:1053px;font-size:12px;line-height:14px;color:#eee">ENG</div>
<div class="a" style="left:1800px;top:1044px;width:64px;text-align:center;font-size:12px;line-height:14px;color:#eee">20:14</div>
<div class="a" style="left:1800px;top:1064px;width:64px;text-align:center;font-size:12px;line-height:14px;color:#eee;letter-spacing:-.3px">03-11-2025</div>
<svg style="left:1880px;top:1052px" width="17" height="15"><path d="M0 0h16v11H7l-3 3v-3H0z" fill="#fff"/><path d="M3 3h10M3 5.500h10M3 8h7" stroke="#1b2b32"/></svg>
<div class="a" style="left:1888px;top:1059px;width:15px;height:15px;border:1px solid #aaa;border-radius:50%;background:#1b2b32;color:#fff;font-size:11px;line-height:15px;text-align:center;font-weight:bold">3</div>
<div class="a" style="left:1916px;top:1040px;width:1px;height:39px;background:#5a6a70"></div>
</body></html>
